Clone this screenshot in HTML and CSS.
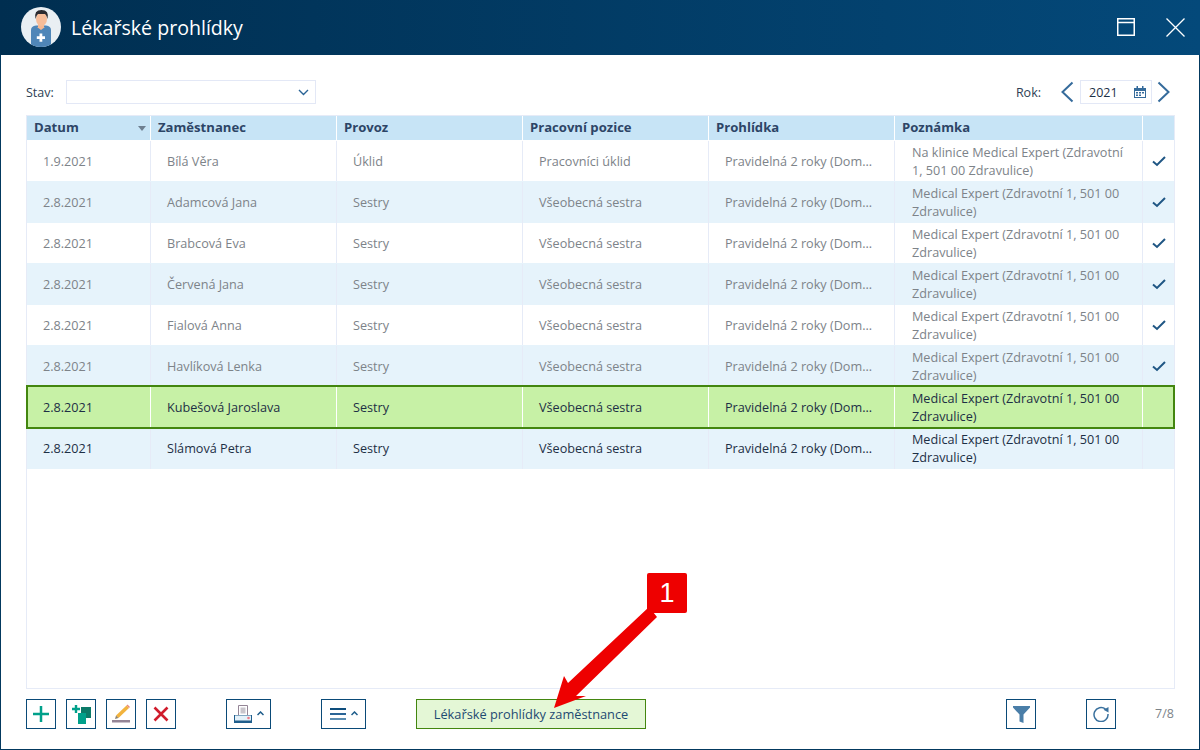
FILE: index.html
```html
<!DOCTYPE html>
<html lang="cs">
<head>
<meta charset="utf-8">
<title>Lékařské prohlídky</title>
<link rel="stylesheet" href="styles.css">
</head>
<body>
<div class="window">
  <header class="titlebar">
    <svg class="avatar" viewBox="0 0 40 40" width="40" height="40">
      <defs><clipPath id="c"><circle cx="20" cy="20" r="20"/></clipPath></defs>
      <circle cx="20" cy="20" r="20" fill="#e9eff3"/>
      <g clip-path="url(#c)">
        <path d="M10 40V23q0-4 5-4.500h10q5 .5 5 4.500v17z" fill="#4f86b8"/>
        <rect x="17" y="15" width="6" height="6" fill="#f5b893"/>
        <path d="M16 20h8l-4 3z" fill="#f5b893"/>
        <ellipse cx="20.500" cy="12" rx="5.500" ry="7" fill="#f7bd99"/>
        <path d="M14.500 12q-2-9 6-9t6 9q-1-4-2.500-5h-7q-1.500 1-2.500 5z" fill="#2b2b30"/>
        <path d="M18.500 26.500h2.800v2.700H24V32h-2.700v2.700h-2.800V32h-2.700v-2.800h2.700z" fill="#fff"/>
      </g>
    </svg>
    <h1 class="title">Lékařské prohlídky</h1>
    <div class="winctl">
      <svg width="18" height="18" viewBox="0 0 18 18"><path d="M.75.75h16.500v16.500H.75z M.75 4.500h16.500" fill="none" stroke="#fff" stroke-width="1.500"/></svg>
      <svg class="close" width="19" height="19" viewBox="0 0 19 19"><path d="M.5.5l18 18M18.500.5l-18 18" fill="none" stroke="#fff" stroke-width="1.300"/></svg>
    </div>
  </header>
  <main class="content">
    <div class="filters">
      <label class="lbl">Stav:</label>
      <div class="select">
        <svg width="11" height="7" viewBox="0 0 11 7"><path d="M1 1l4.500 4.500L10 1" fill="none" stroke="#2a6496" stroke-width="1.400"/></svg>
      </div>
      <span class="spacer"></span>
      <label class="lbl rok">Rok:</label>
      <svg class="nav" width="14" height="22" viewBox="0 0 14 22"><path d="M12.500 1.500L2.500 11l10 9.500" fill="none" stroke="#356b9b" stroke-width="2"/></svg>
      <div class="year">2021
        <svg width="12" height="12" viewBox="0 0 12 12"><path d="M0 2h12v10H0z" fill="#356b9b"/><path d="M1 5h10v6H1z" fill="#fff"/><path d="M2.500 0h1.500v3H2.500zM8 0h1.500v3H8z" fill="#356b9b"/><path d="M2 6h2v1.500H2zM5 6h2v1.500H5zM8 6h2v1.500H8zM2 8.500h2V10H2zM5 8.500h2V10H5z" fill="#356b9b"/></svg>
      </div>
      <svg class="nav last" width="14" height="22" viewBox="0 0 14 22"><path d="M1.500 1.500l10 9.500-10 9.500" fill="none" stroke="#356b9b" stroke-width="2"/></svg>
    </div>

    <div class="grid">
      <div class="row head">
        <div class="cell sort">Datum<i class="caret"></i></div>
        <div class="cell">Zaměstnanec</div>
        <div class="cell">Provoz</div>
        <div class="cell">Pracovní pozice</div>
        <div class="cell">Prohlídka</div>
        <div class="cell">Poznámka</div>
        <div class="cell"></div>
      </div>
      <div class="row done">
        <div class="cell">1.9.2021</div><div class="cell">Bílá Věra</div><div class="cell">Úklid</div><div class="cell">Pracovníci úklid</div><div class="cell">Pravidelná 2 roky (Dom...</div><div class="cell note">Na klinice Medical Expert (Zdravotní 1, 501 00 Zdravulice)</div>
        <div class="cell chk"><svg width="14" height="11" viewBox="0 0 14 11"><path d="M1 5.500l4 3.500 8-8" fill="none" stroke="#1f5684" stroke-width="2"/></svg></div>
      </div>
      <div class="row done alt">
        <div class="cell">2.8.2021</div><div class="cell">Adamcová Jana</div><div class="cell">Sestry</div><div class="cell">Všeobecná sestra</div><div class="cell">Pravidelná 2 roky (Dom...</div><div class="cell note">Medical Expert (Zdravotní 1, 501 00 Zdravulice)</div>
        <div class="cell chk"><svg width="14" height="11" viewBox="0 0 14 11"><path d="M1 5.500l4 3.500 8-8" fill="none" stroke="#1f5684" stroke-width="2"/></svg></div>
      </div>
      <div class="row done">
        <div class="cell">2.8.2021</div><div class="cell">Brabcová Eva</div><div class="cell">Sestry</div><div class="cell">Všeobecná sestra</div><div class="cell">Pravidelná 2 roky (Dom...</div><div class="cell note">Medical Expert (Zdravotní 1, 501 00 Zdravulice)</div>
        <div class="cell chk"><svg width="14" height="11" viewBox="0 0 14 11"><path d="M1 5.500l4 3.500 8-8" fill="none" stroke="#1f5684" stroke-width="2"/></svg></div>
      </div>
      <div class="row done alt">
        <div class="cell">2.8.2021</div><div class="cell">Červená Jana</div><div class="cell">Sestry</div><div class="cell">Všeobecná sestra</div><div class="cell">Pravidelná 2 roky (Dom...</div><div class="cell note">Medical Expert (Zdravotní 1, 501 00 Zdravulice)</div>
        <div class="cell chk"><svg width="14" height="11" viewBox="0 0 14 11"><path d="M1 5.500l4 3.500 8-8" fill="none" stroke="#1f5684" stroke-width="2"/></svg></div>
      </div>
      <div class="row done">
        <div class="cell">2.8.2021</div><div class="cell">Fialová Anna</div><div class="cell">Sestry</div><div class="cell">Všeobecná sestra</div><div class="cell">Pravidelná 2 roky (Dom...</div><div class="cell note">Medical Expert (Zdravotní 1, 501 00 Zdravulice)</div>
        <div class="cell chk"><svg width="14" height="11" viewBox="0 0 14 11"><path d="M1 5.500l4 3.500 8-8" fill="none" stroke="#1f5684" stroke-width="2"/></svg></div>
      </div>
      <div class="row done alt">
        <div class="cell">2.8.2021</div><div class="cell">Havlíková Lenka</div><div class="cell">Sestry</div><div class="cell">Všeobecná sestra</div><div class="cell">Pravidelná 2 roky (Dom...</div><div class="cell note">Medical Expert (Zdravotní 1, 501 00 Zdravulice)</div>
        <div class="cell chk"><svg width="14" height="11" viewBox="0 0 14 11"><path d="M1 5.500l4 3.500 8-8" fill="none" stroke="#1f5684" stroke-width="2"/></svg></div>
      </div>
      <div class="row selected">
        <div class="cell">2.8.2021</div><div class="cell">Kubešová Jaroslava</div><div class="cell">Sestry</div><div class="cell">Všeobecná sestra</div><div class="cell">Pravidelná 2 roky (Dom...</div><div class="cell note">Medical Expert (Zdravotní 1, 501 00 Zdravulice)</div>
        <div class="cell chk"></div>
      </div>
      <div class="row alt last-row">
        <div class="cell">2.8.2021</div><div class="cell">Slámová Petra</div><div class="cell">Sestry</div><div class="cell">Všeobecná sestra</div><div class="cell">Pravidelná 2 roky (Dom...</div><div class="cell note">Medical Expert (Zdravotní 1, 501 00 Zdravulice)</div>
        <div class="cell chk"></div>
      </div>
    </div>

    <footer class="toolbar">
      <button class="btn">
        <svg width="18" height="18" viewBox="0 0 18 18"><path d="M9 1v16M1 9h16" stroke="#00a08a" stroke-width="2.500" fill="none"/></svg>
      </button>
      <button class="btn">
        <svg width="24" height="20" viewBox="0 0 24 20"><path d="M12 3h10v11H12z" fill="#0b7a68"/><path d="M9 9h8v11H9z" fill="#00a08a"/><path d="M5.800 1h2.400v2.800H11v2.400H8.200V9H5.800V6.200H3V3.800h2.800z" fill="#00a08a"/></svg>
      </button>
      <button class="btn">
        <svg width="20" height="20" viewBox="0 0 20 20"><path d="M5 11.500L15.500 1.500l2.500 2.500L7.500 14z" fill="#f2b33d"/><path d="M15.500 1.500l1-1 2.500 2.500-1 1z" fill="#e88a7a"/><path d="M5 11.500l2.500 2.500-3.500 1z" fill="#8a8070"/><path d="M1 16h18v2.500H1z" fill="#948596"/></svg>
      </button>
      <button class="btn">
        <svg width="16" height="16" viewBox="0 0 16 16"><path d="M1.500 1.500l13 13M14.500 1.500l-13 13" stroke="#d01c2c" stroke-width="2.600" fill="none"/></svg>
      </button>
      <button class="btn wide print">
        <svg width="18" height="18" viewBox="0 0 18 18"><path d="M4.500.5h9v10h-9z" fill="#fff" stroke="#948596"/><path d="M6.500 2.500h5v6h-5z" fill="#c9c5cc"/><path d="M0 10h18v8H0z" fill="#1f5e8c"/><path d="M1 10.500h16V15.500H1z" fill="#e4f1f9"/><circle cx="14.500" cy="13" r="1.300" fill="#ee7b88"/></svg>
        <svg class="up" width="7" height="5" viewBox="0 0 7 5"><path d="M.5 4l3-3 3 3" fill="none" stroke="#1f5e8c" stroke-width="1.500"/></svg>
      </button>
      <button class="btn wide menu">
        <svg width="16" height="13" viewBox="0 0 16 13"><path d="M0 0h16v2H0z" fill="#0e4d7c"/><path d="M0 5h16v2H0z" fill="#2a6496"/><path d="M0 10h16v2H0z" fill="#5b8cb0"/></svg>
        <svg class="up" width="7" height="5" viewBox="0 0 7 5"><path d="M.5 4l3-3 3 3" fill="none" stroke="#1f5e8c" stroke-width="1.500"/></svg>
      </button>
      <button class="action">Lékařské prohlídky zaměstnance</button>
      <span class="spacer"></span>
      <button class="btn">
        <svg width="17" height="17" viewBox="0 0 17 17"><path d="M0 0h17v1.500L10.500 8.500V17l-4-1.500v-7L0 1.500z" fill="#4a7ea8"/></svg>
      </button>
      <button class="btn refresh">
        <svg width="16" height="16" viewBox="0 0 16 16"><path d="M12.500 3.200A7 7 0 1 0 15 8" fill="none" stroke="#3a719e" stroke-width="1.500"/><path d="M10.500 3.700L15.500 1v5.500z" fill="#3a719e"/></svg>
      </button>
      <span class="count">7/8</span>
    </footer>
  </main>

  <div class="badge">1</div>
  <svg class="arrow" width="140" height="120" viewBox="0 0 140 120">
    <path d="M99 2L107 12 26 91 36 91 4 103 14 71 18 78z" fill="#ee0000"/>
  </svg>
</div>
</body>
</html>
```
FILE: styles.css
```css
* { box-sizing: border-box; }
html, body { margin: 0; height: 100%; }
body { font-family: "Open Sans", "Noto Sans", sans-serif; font-size: 12px; color: #1d2f45; background: #fff; overflow: hidden; }

.window { position: relative; width: 1200px; height: 750px; display: flex; flex-direction: column; border: 1px solid #03395f; border-top: 0; background: #fff; }

.titlebar { height: 55px; flex: none; margin: 0 -1px; display: flex; align-items: center; padding: 0 15px 0 21px; background: linear-gradient(90deg, #002e50 0%, #04497a 100%); color: #fff; }
.avatar { flex: none; margin-top: -1px; }
.title { margin: 0 0 0 10px; font-size: 19.600px; font-weight: 400; color: #fff; line-height: 26px; flex: 1; }
.winctl { display: flex; align-items: center; gap: 31px; margin-top: -1px; }
.winctl svg { display: block; }

.content { flex: 1; display: flex; flex-direction: column; padding: 25px 24px 0 25px; min-height: 0; }

.filters { display: flex; align-items: center; height: 24px; flex: none; margin-bottom: 11px; }
.lbl { font-size: 12.500px; color: #2e3f55; }
.select { width: 250px; height: 24px; margin-left: 12px; border: 1px solid #e3e8f6; display: flex; align-items: center; justify-content: flex-end; padding-right: 6px; }
.spacer { flex: 1; }
.rok { margin-right: 19px; }
.nav { display: block; }
.nav.last { margin-right: 4px; }
.year { width: 72px; height: 24px; margin: 0 5px 0 6px; border: 1px solid #e3e8f6; display: flex; align-items: center; justify-content: space-between; padding: 0 5px 0 8px; font-size: 12.500px; color: #1d2f45; }

.grid { height: 574px; flex: none; border: 1px solid #e6ebf7; display: flex; flex-direction: column; }
.row { display: grid; grid-template-columns: 124px 186px 186px 186px 186px 248px 1fr; height: 41px; flex: none; color: #1d2f45; }
.row.alt { background: #e6f3fb; box-shadow: 0 -1px 0 #e6f3fb; }
.row.done { color: #7d8389; }
.row.head { height: 25px; background: #c7e4f6; border-bottom: 1px solid #fff; font-weight: 700; color: #2d4566; }
.cell { display: flex; align-items: center; padding: 0 7px 2px 16px; border-right: 1px solid #e6ebf7; line-height: 18px; font-size: 12.650px; min-width: 0; white-space: nowrap; }
.row .cell:last-child { border-right: 0; }
.head .cell { padding: 0 7px 2px; border-right-color: #fff; font-size: 13.100px; }
.sort { justify-content: space-between; padding-right: 4px !important; }
.caret { width: 0; height: 0; border-left: 4.500px solid transparent; border-right: 4.500px solid transparent; border-top: 5px solid #6e7f90; margin-top: 3px; }
.note { white-space: normal; padding: 0 12px 2px 17px; }
.chk { justify-content: center; padding: 0; }

.row.selected { position: relative; z-index: 1; background: #c7f1a6; color: #1d2f45; box-shadow: 0 -2px 0 #c7f1a6, 0 1px 0 #c7f1a6; margin: 0 -1px; grid-template-columns: 125px 186px 186px 186px 186px 248px 1fr; }
.row.selected::after { content: ""; position: absolute; inset: -2px 0 -1px; border: 2px solid #43860f; pointer-events: none; }
.selected .cell { border-right-color: #fff; }
.selected .cell:first-child { padding-left: 17px; }

.toolbar { flex: 1; display: flex; align-items: flex-start; padding-top: 10px; min-height: 0; }
.btn { width: 30px; height: 30px; padding: 0; margin: 0 10px 0 0; border: 1px solid #0a4a78; background: #fff; display: flex; align-items: center; justify-content: center; flex: none; }
.btn svg { display: block; }
.btn.wide { width: 45px; gap: 5px; }
.btn.print { margin-left: 40px; margin-right: 50px; }
.btn.menu { margin-right: 50px; }
.up { margin-top: -2px; }
.action { width: 230px; height: 30px; padding: 0; border: 1px solid #43860f; background: #e4f7d6; font-family: inherit; font-size: 12.800px; color: #1e4a72; flex: none; }
.refresh { margin-right: 0; margin-left: 40px; }
.count { width: 59px; text-align: right; color: #7d8389; font-size: 12.500px; padding: 7px 1px 0 0; line-height: 16px; }

.badge { position: absolute; left: 646px; top: 573px; width: 40px; height: 40px; background: #ee0000; border-radius: 2px; color: #fff; font-family: "Liberation Sans", sans-serif; font-size: 27px; display: flex; align-items: center; justify-content: center; }
.arrow { position: absolute; left: 549px; top: 605px; }
```
